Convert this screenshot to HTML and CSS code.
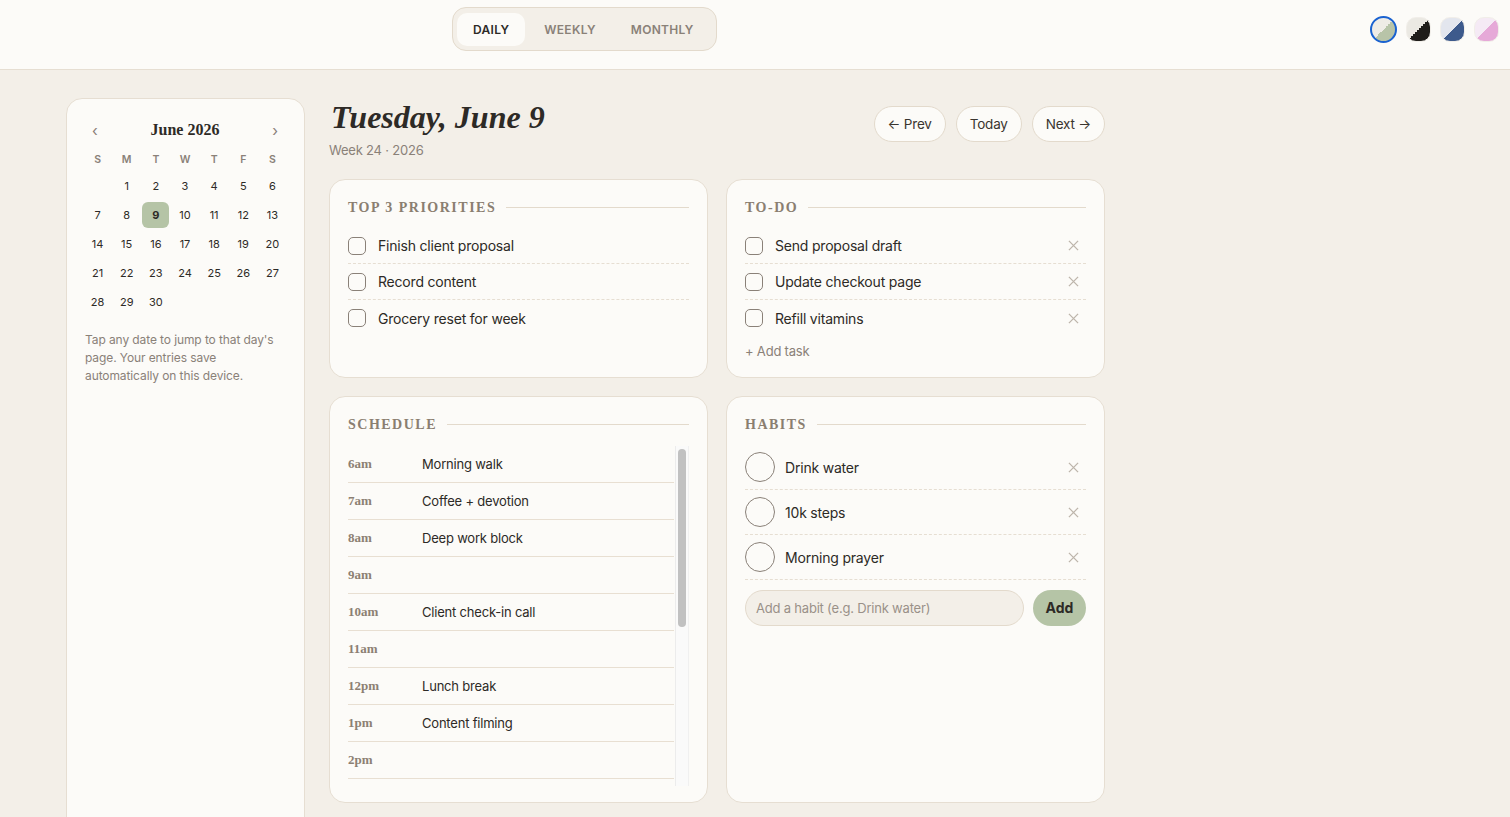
FILE: index.html
```html
<!DOCTYPE html>
<html>
<head>
	<meta charset="utf-8">
	<title>Daily Planner</title>
	<link rel="stylesheet" href="styles.css">
</head>
<body>
	<header class="topbar">
		<nav class="views">
			<span class="view active">Daily</span>
			<span class="view">Weekly</span>
			<span class="view">Monthly</span>
		</nav>
		<div class="themes">
			<span class="theme sage selected"></span>
			<span class="theme ink"></span>
			<span class="theme navy"></span>
			<span class="theme pink"></span>
		</div>
	</header>

	<div class="page">
		<aside class="sidebar">
			<div class="month">
				<span class="arrow">&lsaquo;</span>
				<span class="month-name">June 2026</span>
				<span class="arrow">&rsaquo;</span>
			</div>
			<div class="weekdays">
				<span>S</span><span>M</span><span>T</span><span>W</span><span>T</span><span>F</span><span>S</span>
			</div>
			<div class="days">
				<span></span><span>1</span><span>2</span><span>3</span><span>4</span><span>5</span><span>6</span>
				<span>7</span><span>8</span><span class="today">9</span><span>10</span><span>11</span><span>12</span><span>13</span>
				<span>14</span><span>15</span><span>16</span><span>17</span><span>18</span><span>19</span><span>20</span>
				<span>21</span><span>22</span><span>23</span><span>24</span><span>25</span><span>26</span><span>27</span>
				<span>28</span><span>29</span><span>30</span>
			</div>
			<p class="note">Tap any date to jump to that day's page. Your entries save automatically on this device.</p>
		</aside>

		<main class="day">
			<div class="day-head">
				<div>
					<h1 class="date">Tuesday, June 9</h1>
					<div class="week">Week 24 &middot; 2026</div>
				</div>
				<div class="pager">
					<span class="btn">&larr; Prev</span>
					<span class="btn">Today</span>
					<span class="btn">Next &rarr;</span>
				</div>
			</div>

			<div class="cards">
				<section class="card">
					<h2 class="card-title">Top 3 Priorities</h2>
					<ul class="checklist">
						<li><span class="box"></span>Finish client proposal</li>
						<li><span class="box"></span>Record content</li>
						<li><span class="box"></span>Grocery reset for week</li>
					</ul>
				</section>

				<section class="card">
					<h2 class="card-title">To-Do</h2>
					<ul class="checklist">
						<li><span class="box"></span><span class="label">Send proposal draft</span><svg class="x" viewBox="0 0 12 12"><path d="M1 1L11 11M11 1L1 11"/></svg></li>
						<li><span class="box"></span><span class="label">Update checkout page</span><svg class="x" viewBox="0 0 12 12"><path d="M1 1L11 11M11 1L1 11"/></svg></li>
						<li><span class="box"></span><span class="label">Refill vitamins</span><svg class="x" viewBox="0 0 12 12"><path d="M1 1L11 11M11 1L1 11"/></svg></li>
					</ul>
					<div class="add-task">+ Add task</div>
				</section>

				<section class="card">
					<h2 class="card-title">Schedule</h2>
					<div class="schedule">
						<div class="slots">
							<div class="slot"><span class="time">6am</span>Morning walk</div>
							<div class="slot"><span class="time">7am</span>Coffee + devotion</div>
							<div class="slot"><span class="time">8am</span>Deep work block</div>
							<div class="slot"><span class="time">9am</span></div>
							<div class="slot"><span class="time">10am</span>Client check-in call</div>
							<div class="slot"><span class="time">11am</span></div>
							<div class="slot"><span class="time">12pm</span>Lunch break</div>
							<div class="slot"><span class="time">1pm</span>Content filming</div>
							<div class="slot"><span class="time">2pm</span></div>
						</div>
						<div class="scrollbar"><span class="thumb"></span></div>
					</div>
				</section>

				<section class="card">
					<h2 class="card-title">Habits</h2>
					<ul class="habits">
						<li><span class="ring"></span><span class="label">Drink water</span><svg class="x" viewBox="0 0 12 12"><path d="M1 1L11 11M11 1L1 11"/></svg></li>
						<li><span class="ring"></span><span class="label">10k steps</span><svg class="x" viewBox="0 0 12 12"><path d="M1 1L11 11M11 1L1 11"/></svg></li>
						<li><span class="ring"></span><span class="label">Morning prayer</span><svg class="x" viewBox="0 0 12 12"><path d="M1 1L11 11M11 1L1 11"/></svg></li>
					</ul>
					<div class="habit-add">
						<span class="habit-input">Add a habit (e.g. Drink water)</span>
						<span class="add-btn">Add</span>
					</div>
				</section>
			</div>
		</main>
	</div>
</body>
</html>
```

FILE: styles.css
```css
*{
	margin: 0;
	padding: 0;
	box-sizing: border-box;
}
body{
	background: #f3efe8;
	color: #2d2a26;
	font-family: Inter, "Noto Sans", sans-serif;
	height: 817px;
	overflow: hidden;
}
ul,li{
	list-style: none;
}

/* top bar */
.topbar{
	height: 70px;
	background: #fcfbf8;
	border-bottom: 1px solid #e6ded2;
	display: flex;
	align-items: flex-start;
	padding-right: 11px;
}
.views{
	margin: 7px 0 0 452px;
	height: 44px;
	display: flex;
	align-items: center;
	padding: 0 4px;
	background: #f3efe8;
	border: 1px solid #e3dacc;
	border-radius: 14px;
}
.view{
	height: 33px;
	line-height: 33px;
	padding: 0 16px;
	font-size: 12px;
	font-weight: 600;
	letter-spacing: 0.3px;
	text-transform: uppercase;
	color: #8a8178;
	border-radius: 10px;
}
.view + .view{
	margin-left: 3px;
}
.view:last-child{
	padding-right: 18px;
}
.view.active{
	background: #fcfbf8;
	color: #2d2a26;
}
.themes{
	margin: 16px 0 0 auto;
	display: flex;
	align-items: center;
	gap: 9px;
}
.theme{
	width: 25px;
	height: 25px;
	border-radius: 10px;
	border: 1.5px solid #f1eee9;
}
.theme.selected{
	width: 27px;
	height: 27px;
	border-radius: 50%;
	border: 2px solid #1a62d0;
}
.sage{ background: linear-gradient(135deg, #efece6 50%, #b8c4a8 50%); }
.ink{ background: linear-gradient(135deg, #ebe9e3 50%, #1f1d1a 50%); }
.navy{ background: linear-gradient(135deg, #e3e6ee 50%, #3d5a8c 50%); }
.pink{ background: linear-gradient(135deg, #f5eaf5 50%, #e6a9d8 50%); }

/* page */
.page{
	display: flex;
	gap: 24px;
	padding: 28px 0 0 66px;
}

/* sidebar calendar */
.sidebar{
	width: 239px;
	min-height: 760px;
	background: #fcfbf8;
	border: 1px solid #e6ded2;
	border-radius: 16px;
	padding: 20px 17px 20px 16px;
}
.month{
	display: flex;
	justify-content: space-between;
	align-items: center;
	height: 22px;
	padding: 0 9px;
}
.month-name{
	font-family: "Liberation Serif", serif;
	font-weight: bold;
	font-size: 16px;
	color: #2d2a26;
}
.arrow{
	color: #8a8178;
	font-size: 15px;
}
.weekdays, .days{
	display: grid;
	grid-template-columns: repeat(7, 1fr);
	justify-items: center;
	align-items: center;
}
.weekdays{
	margin-top: 8px;
	height: 20px;
	font-size: 10.5px;
	font-weight: 600;
	color: #8a8178;
}
.days{
	margin-top: 2px;
	grid-auto-rows: 29px;
	font-size: 11px;
	color: #2d2a26;
}
.days span{
	width: 27px;
	height: 26px;
	line-height: 26px;
	text-align: center;
	border-radius: 6px;
}
.days .today{
	background: #b5c4a6;
	font-weight: 700;
}
.note{
	margin-top: 15px;
	padding-left: 2px;
	font-size: 12px;
	line-height: 18px;
	letter-spacing: -0.1px;
	color: #8a8178;
}

/* main day page */
.day{
	width: 776px;
}
.day-head{
	display: flex;
	justify-content: space-between;
	align-items: flex-start;
}
.date{
	font-family: "Liberation Serif", serif;
	font-style: italic;
	font-weight: bold;
	font-size: 32px;
	line-height: 38px;
	margin-left: 2px;
	color: #2d2a26;
}
.week{
	margin-top: 5px;
	font-size: 13px;
	line-height: 18px;
	letter-spacing: -0.2px;
	color: #8a8178;
}
.pager{
	display: flex;
	gap: 10px;
	margin-top: 8px;
}
.btn{
	height: 36px;
	line-height: 34px;
	padding: 0 13px;
	border: 1px solid #e3dacc;
	border-radius: 18px;
	background: #fcfbf8;
	font-size: 13.5px;
	letter-spacing: -0.2px;
	color: #3a352f;
}

.cards{
	margin-top: 20px;
	display: grid;
	grid-template-columns: 1fr 1fr;
	grid-template-rows: 199px 407px;
	gap: 18px;
}
.card{
	background: #fcfbf8;
	border: 1px solid #e6ded2;
	border-radius: 16px;
	padding: 19px 18px 18px;
}
.card-title{
	display: flex;
	align-items: center;
	gap: 10px;
	height: 17px;
	font-family: "Liberation Serif", serif;
	font-weight: bold;
	font-size: 14px;
	letter-spacing: 1.5px;
	text-transform: uppercase;
	color: #8a7e70;
}
.card-title:after{
	content: "";
	flex: 1;
	height: 1px;
	background: #e3dacc;
}

.checklist{
	margin-top: 12px;
}
.checklist li{
	height: 36px;
	display: flex;
	align-items: center;
	gap: 12px;
	font-size: 14px;
	letter-spacing: -0.2px;
	border-bottom: 1px dashed #e6ded2;
}
.checklist li:last-child{
	border-bottom: none;
}
.box{
	width: 18px;
	height: 18px;
	border: 1.5px solid #8a8178;
	border-radius: 5px;
}
.label{
	flex: 1;
}
.x{
	width: 11px;
	height: 11px;
	margin-right: 7px;
	stroke: #bdb5ab;
	stroke-width: 1.4;
	fill: none;
}
.add-task{
	margin-top: 6px;
	font-size: 13px;
	line-height: 18px;
	letter-spacing: -0.2px;
	color: #8a8178;
}

/* schedule */
.schedule{
	margin-top: 13px;
	height: 340px;
	display: flex;
	overflow: hidden;
}
.slots{
	flex: 1;
	margin-right: 1px;
}
.slot{
	height: 37px;
	display: flex;
	align-items: center;
	border-bottom: 1px solid #e8dfd2;
	font-size: 13px;
	letter-spacing: -0.2px;
}
.time{
	width: 74px;
	font-family: "Liberation Serif", serif;
	font-weight: bold;
	font-size: 13px;
	letter-spacing: 0;
	color: #8c8073;
}
.scrollbar{
	width: 14px;
	background: #fafafa;
	border-left: 1px solid #ececec;
	border-right: 1px solid #f0f0f0;
	padding: 3px 2px;
}
.thumb{
	display: block;
	height: 178px;
	background: #c1c1c1;
	border-radius: 4px;
}

/* habits */
.habits{
	margin-top: 12px;
}
.habits li{
	height: 45px;
	display: flex;
	align-items: center;
	gap: 10px;
	font-size: 14px;
	letter-spacing: -0.2px;
	border-bottom: 1px dashed #e6ded2;
}
.ring{
	width: 30px;
	height: 30px;
	border: 1.5px solid #8a8178;
	border-radius: 50%;
}
.habit-add{
	margin-top: 10px;
	display: flex;
	gap: 9px;
}
.habit-input{
	flex: 1;
	height: 36px;
	line-height: 34px;
	padding: 0 10px;
	background: #f3efe8;
	border: 1px solid #e3dacc;
	border-radius: 18px;
	font-size: 13px;
	letter-spacing: -0.2px;
	color: #9a9188;
}
.add-btn{
	width: 53px;
	height: 36px;
	line-height: 36px;
	text-align: center;
	background: #b5c4a6;
	border-radius: 18px;
	font-size: 14px;
	font-weight: 700;
	color: #2d2a26;
}
```
